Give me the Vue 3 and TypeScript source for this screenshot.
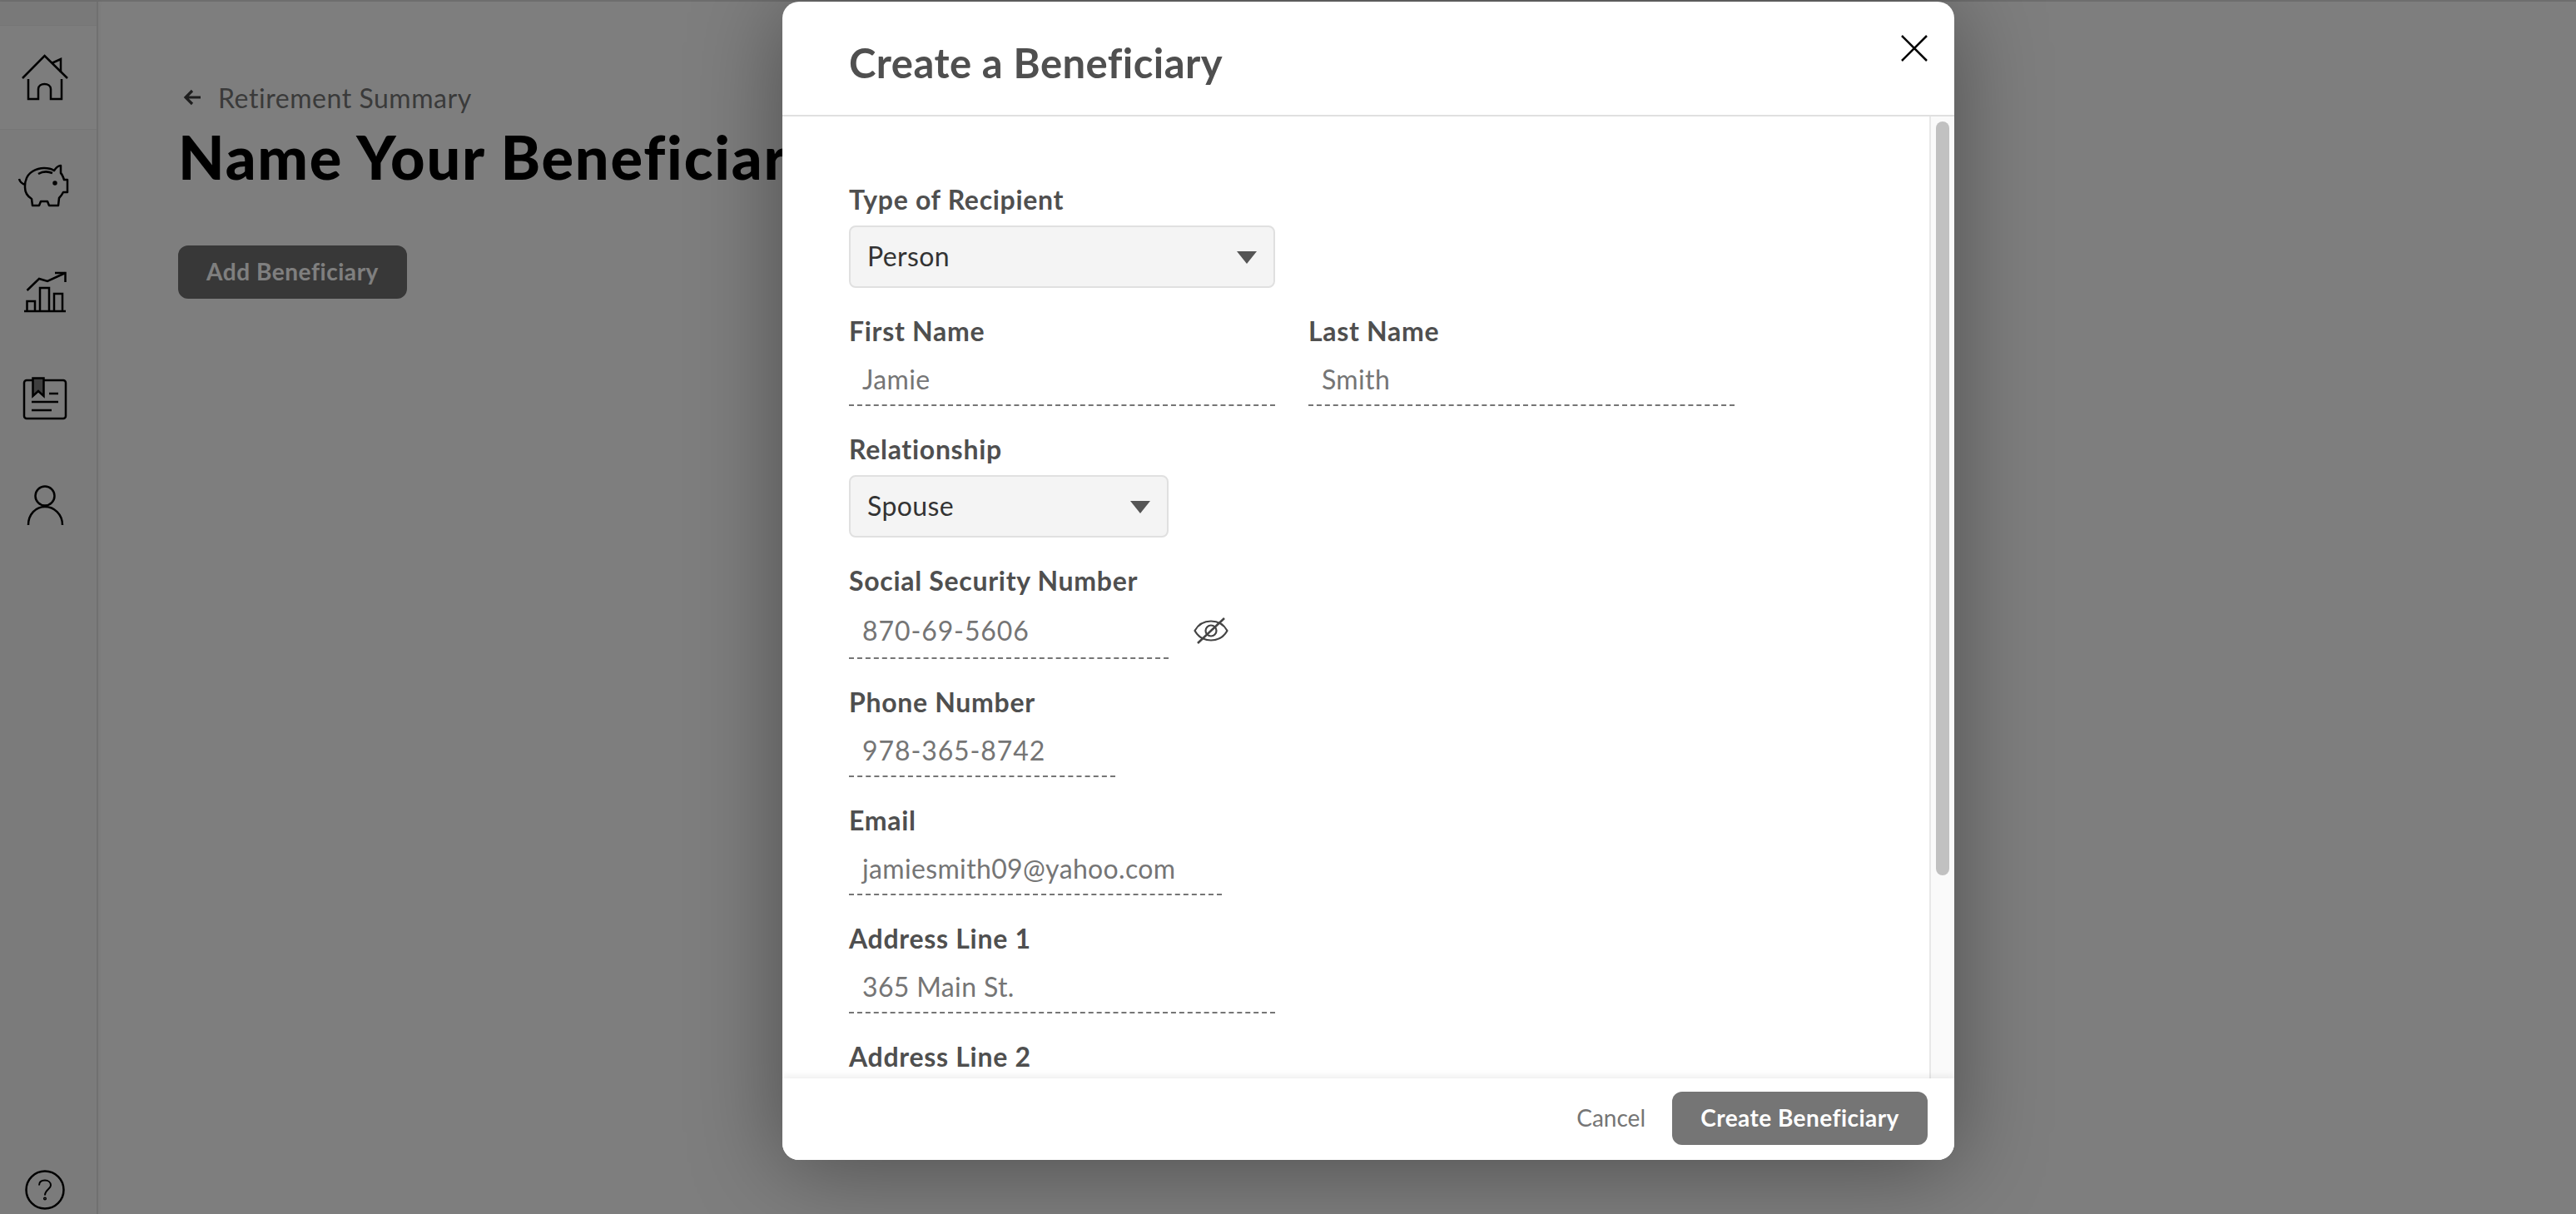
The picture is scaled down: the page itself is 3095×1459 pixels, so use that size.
<script setup lang="ts">
interface Field { label: string; value: string; width: number; numeric?: boolean; }
const contact: Field[] = [
  { label: 'Phone Number', value: '978-365-8742', width: 320, numeric: true },
  { label: 'Email', value: 'jamiesmith09@yahoo.com', width: 448 },
  { label: 'Address Line 1', value: '365 Main St.', width: 512 },
];
</script>

<template>
  <div class="page">
    <div class="topline"></div>
    <div class="shell">
      <aside class="sidebar">
        <div class="strip"></div>
        <div class="nav-item home">
          <svg width="70" height="70" viewBox="19 59 70 70" fill="none" stroke="#000" stroke-width="2.5">
            <path d="M27 95 L53.6 68 L81 95" />
            <path d="M62 77 L73 72 L73 88" />
            <path d="M34 96 L34 120 L46 120 L46 108 C46 100 61 100 61 108 L61 120 L74 120 L74 96" />
          </svg>
        </div>
        <div class="nav-item pig">
          <svg width="70" height="70" viewBox="19 187 70 70" fill="none" stroke="#000" stroke-width="2.5" stroke-linejoin="round">
            <path d="M23 214 C24 218 26 220 31 221" />
            <path d="M31 216 C33 206 44 201 53 201 C58 201 62 202 65 204 C67 201 70 198 73 198 L73 207 C75 209 76 212 77 215 L81 215 L81 230 L76 230 C74 234 72 236 71 237 L70 246 L59 246 L57 241 L49 241 L47 246 L39 246 L38 238 C33 235 30 230 30 224 C30 221 30 218 31 216 Z" />
            <path d="M46 208 C51 205 58 205 63 207" />
            <circle cx="66" cy="219" r="1.5" />
          </svg>
        </div>
        <div class="nav-item">
          <svg width="70" height="70" viewBox="19 316 70 70" fill="none" stroke="#000" stroke-width="2.5">
            <path d="M29 374 L79 374" />
            <path d="M32.500 374 L32.500 362 L42 362 L42 374" />
            <path d="M48 374 L48 346 L59 346 L59 374" />
            <path d="M65 374 L65 353 L75 353 L75 374" />
            <path d="M32.500 349 L47 335 L57 338 L78.500 328" />
            <path d="M66 328 L78.500 328 L78.500 339" />
          </svg>
        </div>
        <div class="nav-item">
          <svg width="70" height="70" viewBox="19 443 70 70" fill="none" stroke="#000" stroke-width="2.5">
            <rect x="29" y="456" width="50" height="46" rx="3" />
            <path d="M39.500 456 L39.500 453.500 L52.500 453.500 L52.500 475 L46 469 L39.500 475 Z" fill="#7c7c7c" />
            <path d="M59 472 L70 472 M38 482 L70 482 M38 492 L62 492" />
          </svg>
        </div>
        <div class="nav-item">
          <svg width="70" height="70" viewBox="19 571 70 70" fill="none" stroke="#000" stroke-width="2.5">
            <circle cx="54" cy="595" r="11.500" />
            <path d="M34 630 C34 617 43 608 54 608 C65 608 75 617 75 630" />
          </svg>
        </div>
        <div class="help">
          <svg width="54" height="54" viewBox="27.500 1403.500 54 54" fill="none" stroke="#000" stroke-width="2.500">
            <circle cx="54.500" cy="1430.500" r="22.500" />
            <path d="M47.500 1425 C47.500 1421 50.500 1419 54.500 1419 C58.500 1419 61.500 1421.500 61.500 1425 C61.500 1429.500 54.500 1430.500 54.500 1437" stroke-width="2" />
            <circle cx="54.500" cy="1441" r="1.300" stroke-width="1.500" />
          </svg>
        </div>
      </aside>

      <main class="main">
        <a class="back">
          <svg width="22" height="22" viewBox="0 0 22 22" fill="none" stroke="#3c3c3c" stroke-width="3.200">
            <path d="M21 11 L3 11 M11 3 L3 11 L11 19" />
          </svg>
          <span>Retirement Summary</span>
        </a>
        <h1 class="title">Name Your Beneficiary</h1>
        <button class="add" type="button">Add Beneficiary</button>
      </main>
    </div>

    <div class="overlay">
      <section class="modal">
        <header class="modal-head">
          <h2>Create a Beneficiary</h2>
          <svg class="close" width="32" height="32" viewBox="0 0 32 32" stroke="#000" stroke-width="2.500">
            <path d="M1 1 L31 31 M31 1 L1 31" />
          </svg>
        </header>

        <div class="modal-body">
          <div class="form">
            <div class="field">
              <label>Type of Recipient</label>
              <div class="select wide"><span>Person</span><i class="caret"></i></div>
            </div>

            <div class="two">
              <div class="field">
                <label>First Name</label>
                <div class="input wide"><span>Jamie</span></div>
              </div>
              <div class="field">
                <label>Last Name</label>
                <div class="input wide"><span>Smith</span></div>
              </div>
            </div>

            <div class="field">
              <label>Relationship</label>
              <div class="select mid"><span>Spouse</span><i class="caret"></i></div>
            </div>

            <div class="field">
              <label>Social Security Number</label>
              <div class="ssn">
                <div class="input mid tall num"><span>870-69-5606</span></div>
                <svg class="eye" width="44" height="36" viewBox="1433 740 44 36" fill="none" stroke="#444" stroke-width="2.200" stroke-linejoin="round">
                  <path d="M1435.500 758 C1440 750 1447 746.500 1455 746.500 C1463 746.500 1470 750 1474.500 758 C1470 766 1463 769.500 1455 769.500 C1447 769.500 1440 766 1435.500 758 Z" />
                  <circle cx="1455" cy="758" r="6.500" />
                  <path d="M1439 773 L1471 743" stroke-width="2.600" />
                </svg>
              </div>
            </div>

            <div v-for="f in contact" :key="f.label" class="field">
              <label>{{ f.label }}</label>
              <div class="input" :class="{ num: f.numeric }" :style="{ width: f.width + 'px' }"><span>{{ f.value }}</span></div>
            </div>

            <div class="field">
              <label>Address Line 2</label>
            </div>
          </div>

          <div class="track"><div class="thumb"></div></div>
        </div>

        <footer class="modal-foot">
          <a class="cancel">Cancel</a>
          <button class="create" type="button">Create Beneficiary</button>
        </footer>
      </section>
    </div>
  </div>
</template>

<style>
html, body { margin: 0; padding: 0; background: #fff; overflow: hidden; }
</style>

<style scoped>
.page {
  position: relative;
  width: 100%;
  height: 100vh;
  min-height: 1459px;
  display: flex;
  flex-direction: column;
  overflow: hidden;
  font-family: "Lato", "Noto Sans", sans-serif;
  background: #fdfdfd;
}
.topline { height: 2px; background: #dcdcdc; flex: none; }
.shell { flex: 1; display: flex; min-height: 0; }

.sidebar {
  width: 116px;
  flex: none;
  display: flex;
  flex-direction: column;
  align-items: stretch;
  background: #f7f7f7;
  border-right: 2px solid #e0e0e0;
  box-shadow: 2px 0 5px rgba(0,0,0,.04);
}
.strip { height: 28px; background: #f3f3f3; border-bottom: 1px solid #ececec; }
.nav-item { height: 128px; display: flex; align-items: center; justify-content: center; padding-right: 8px; box-sizing: border-box; }
.nav-item.home { height: 125px; background: #fafafa; border-bottom: 1px solid #ececec; }
.nav-item.pig { margin-top: 3px; }
.help { margin-top: auto; height: 54px; margin-bottom: 2px; display: flex; justify-content: center; padding-right: 8px; }
.nav-item svg, .help svg { display: block; }

.main { flex: 1; min-width: 0; padding: 95px 0 0 96px; overflow: hidden; }
.back { display: flex; align-items: center; height: 40px; color: #757575; font-size: 32px; gap: 20px; letter-spacing: .55px; }
.back svg { margin-left: 6px; }
.title { margin: 11px 0 67px; height: 80px; line-height: 80px; font-size: 72px; font-weight: 900; color: #000; white-space: nowrap; letter-spacing: 1.8px; }
.add {
  display: block;
  width: 275px;
  height: 64px;
  padding: 0 0 2px;
  border: 0;
  border-radius: 12px;
  background: #707070;
  color: #fff;
  font: 700 28px "Lato", "Noto Sans", sans-serif;
  letter-spacing: .55px;
}

.overlay { position: absolute; inset: 0; background: rgba(0,0,0,.5); }
.modal {
  position: absolute;
  left: 940px;
  top: 2px;
  width: 1408px;
  height: 1392px;
  display: flex;
  flex-direction: column;
  background: #fff;
  border-radius: 20px;
  box-shadow: 0 8px 110px rgba(0,0,0,.38);
  overflow: hidden;
}
.modal-head {
  height: 136px;
  flex: none;
  box-sizing: content-box;
  border-bottom: 2px solid #e0e0e0;
  display: flex;
  align-items: center;
  padding-left: 80px;
  position: relative;
}
.modal-head h2 { margin: 10px 0 0; font-size: 49px; font-weight: 700; color: #4f4f4f; letter-spacing: .45px; }
.close { position: absolute; left: 1344px; top: 40px; }

.modal-body { flex: 1; min-height: 0; display: flex; overflow: hidden; }
.form { flex: 1; min-width: 0; padding: 80px 0 0 80px; overflow: hidden; }
.track { width: 30px; box-sizing: border-box; flex: none; background: #fafafa; border-left: 2px solid #e8e8e8; padding: 6px 0 0 6px; }
.thumb { width: 16px; height: 906px; border-radius: 8px; background: #c1c1c1; }

.two { display: flex; gap: 40px; }
.field { margin-bottom: 32px; }
label { display: block; height: 40px; line-height: 40px; font-size: 32px; font-weight: 700; color: #4f4f4f; white-space: nowrap; letter-spacing: .7px; }

.select {
  box-sizing: border-box;
  height: 75px;
  margin-top: 11px;
  display: flex;
  align-items: center;
  justify-content: space-between;
  padding: 0 20px 2px;
  background: #f4f4f4;
  border: 2px solid #e0e0e0;
  border-radius: 8px;
  font-size: 32px;
  letter-spacing: .4px;
  color: #333;
}
.caret {
  display: block;
  width: 0;
  height: 0;
  border-left: 12px solid transparent;
  border-right: 12px solid transparent;
  border-top: 15px solid #555;
  margin-top: 4px;
}
.wide { width: 512px; }
.mid { width: 384px; }

.input {
  box-sizing: border-box;
  height: 70px;
  padding: 6px 16px 0;
  display: flex;
  align-items: center;
  border-bottom: 2px dashed #757575;
  font-size: 32px;
  color: #757575;
  letter-spacing: .35px;
}
.input.num { letter-spacing: .9px; }
.input.tall { height: 74px; }
.ssn { display: flex; align-items: flex-start; }
.eye { margin: 22px 0 0 29px; }

.modal-foot {
  height: 98px;
  flex: none;
  display: flex;
  align-items: flex-start;
  justify-content: flex-end;
  gap: 32px;
  padding: 16px 32px 0 0;
  box-sizing: border-box;
  background: #fff;
  box-shadow: 0 -3px 8px rgba(0,0,0,.07);
  position: relative;
}
.cancel { height: 62px; line-height: 62px; font-size: 28px; color: #757575; }
.create {
  width: 307px;
  height: 64px;
  padding: 0 0 2px;
  border: 0;
  border-radius: 12px;
  background: #757575;
  color: #fff;
  font: 700 28px "Lato", "Noto Sans", sans-serif;
  letter-spacing: .45px;
}
</style>
